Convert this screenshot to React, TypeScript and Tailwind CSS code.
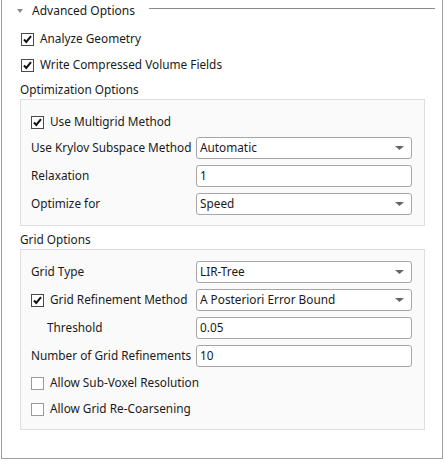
import React from "react";

type Field = {
  label: string;
  kind: "select" | "input";
  value: string;
  check?: boolean;
  indent?: boolean;
};

function CheckBox({ checked }: { checked: boolean }) {
  return (
    <span
      className={`flex h-[13px] w-[13px] shrink-0 items-center justify-center border bg-white ${
        checked ? "border-[#4a4a4a]" : "border-[#9a9a9a]"
      }`}
    >
      {checked && (
        <svg width="11" height="11" viewBox="0 0 11 11">
          <path d="M2 5.5 L4.3 8 L9 2.2" fill="none" stroke="#111" strokeWidth="2" />
        </svg>
      )}
    </span>
  );
}

function Control({ kind, value }: { kind: "select" | "input"; value: string }) {
  return (
    <div className="flex h-[22px] w-[216px] items-center justify-between rounded-[3px] border border-[#a6a6a6] bg-white pl-[3px] pr-[6px]">
      <span>{value}</span>
      {kind === "select" && (
        <svg width="9" height="5" viewBox="0 0 9 5" className="mr-[1px]">
          <path d="M0 0 H9 L4.5 4 Z" fill="#666" />
        </svg>
      )}
    </div>
  );
}

function FieldRow({ f }: { f: Field }) {
  return (
    <div className="flex h-[22px] items-center">
      <div className={`flex w-[165px] items-center ${f.indent ? "pl-[16px]" : ""}`}>
        {f.check !== undefined && (
          <span className="mr-[6px]">
            <CheckBox checked={f.check} />
          </span>
        )}
        <span>{f.label}</span>
      </div>
      <Control kind={f.kind} value={f.value} />
    </div>
  );
}

const optimization: Field[] = [
  { label: "Use Krylov Subspace Method", kind: "select", value: "Automatic" },
  { label: "Relaxation", kind: "input", value: "1" },
  { label: "Optimize for", kind: "select", value: "Speed" },
];

const grid: Field[] = [
  { label: "Grid Type", kind: "select", value: "LIR-Tree" },
  { label: "Grid Refinement Method", kind: "select", value: "A Posteriori Error Bound", check: true },
  { label: "Threshold", kind: "input", value: "0.05", indent: true },
  { label: "Number of Grid Refinements", kind: "input", value: "10" },
];

function CheckRow({ label, checked, className = "" }: { label: string; checked: boolean; className?: string }) {
  return (
    <div className={`flex h-[22px] items-center gap-[6px] ${className}`}>
      <CheckBox checked={checked} />
      <span>{label}</span>
    </div>
  );
}

export default function App() {
  return (
    <div className="h-[461px] w-[445px] bg-white font-['Noto_Sans',sans-serif] text-[11.8px] text-[#1a1a1a]">
      <div className="ml-[1px] h-[459px] w-[442px] border-x border-b border-[#a0a0a0] bg-white">
        {/* header */}
        <div className="flex h-[22px] items-center">
          <svg width="6" height="4" viewBox="0 0 6 4" className="ml-[15px] mr-[9px]">
            <path d="M0 0 H6 L3 4 Z" fill="#8a8a8a" />
          </svg>
          <span className="text-[12px]">Advanced Options</span>
          <div className="ml-[14px] mr-[7px] mb-[6px] h-px flex-1 bg-[#8a8a8a]" />
        </div>

        <div className="pl-[19px]">
          <CheckRow label="Analyze Geometry" checked className="mt-[6px]" />
          <CheckRow label="Write Compressed Volume Fields" checked className="mt-[4px]" />
        </div>

        <div className="mt-[4px] flex h-[19px] items-center pl-[18px]">Optimization Options</div>
        <div className="ml-[18px] mr-[17px] border border-[#dedede] bg-[#fafafa] pb-[10px] pl-[10px] pt-[11px]">
          <CheckRow label="Use Multigrid Method" checked />
          <div className="mt-[4px] flex flex-col gap-[6px]">
            {optimization.map((f) => (
              <FieldRow key={f.label} f={f} />
            ))}
          </div>
        </div>

        <div className="mt-[5px] flex h-[18px] items-center pl-[18px]">Grid Options</div>
        <div className="ml-[18px] mr-[17px] border border-[#dedede] bg-[#fafafa] pb-[9px] pl-[10px] pt-[11px]">
          <div className="flex flex-col gap-[6px]">
            {grid.map((f) => (
              <FieldRow key={f.label} f={f} />
            ))}
          </div>
          <CheckRow label="Allow Sub-Voxel Resolution" checked={false} className="mt-[5px]" />
          <CheckRow label="Allow Grid Re-Coarsening" checked={false} className="mt-[4px]" />
        </div>
      </div>
    </div>
  );
}
